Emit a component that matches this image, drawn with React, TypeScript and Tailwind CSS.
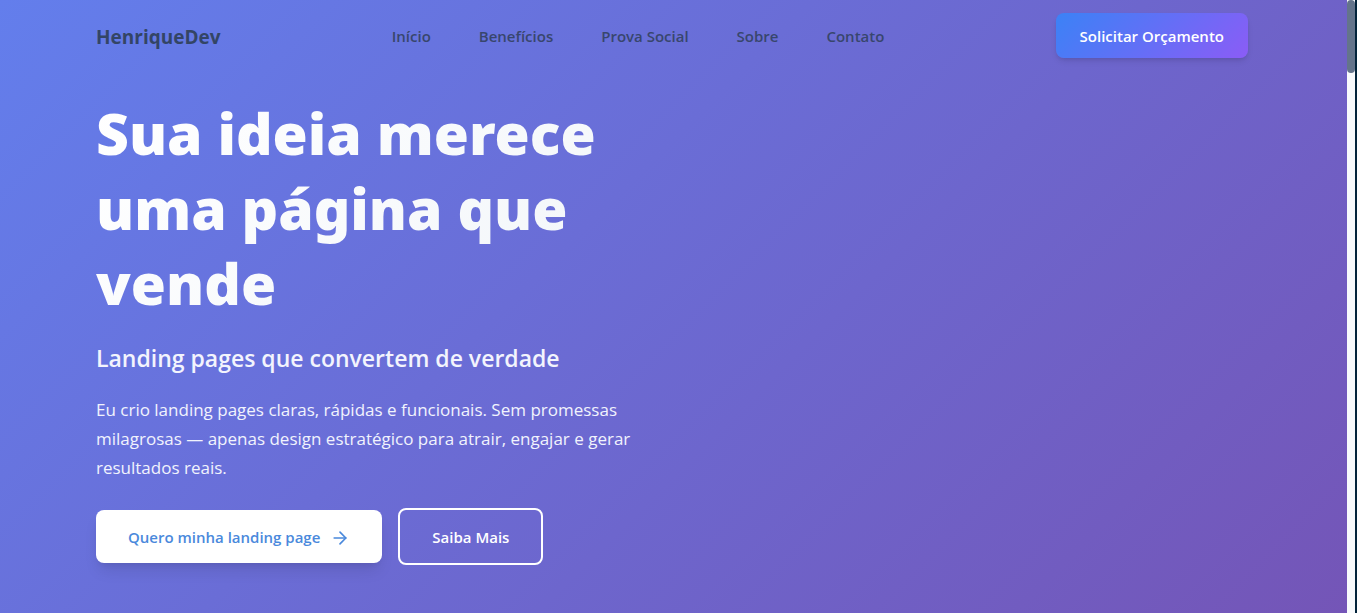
import { ArrowRight } from "lucide-react";

const links = [
  { label: "Início", href: "#inicio" },
  { label: "Benefícios", href: "#beneficios" },
  { label: "Prova Social", href: "#prova-social" },
  { label: "Sobre", href: "#sobre" },
  { label: "Contato", href: "#contato" },
];

function Header() {
  return (
    <header className="flex max-w-[1152px] items-center justify-between pt-[13px]">
      <a href="#inicio" className="pt-0.5 text-[19px] leading-7 font-bold text-[#334565]">
        HenriqueDev
      </a>
      <nav className="flex gap-12 text-[15px] leading-6 font-semibold text-[#38466d]">
        {links.map((link) => (
          <a key={link.href} href={link.href}>
            {link.label}
          </a>
        ))}
      </nav>
      <button
        type="button"
        className="h-[45px] rounded-lg bg-[linear-gradient(135deg,#3b82f6,#8b5cf6)] px-6 pt-0.5 text-[15px] font-semibold text-white shadow-md"
      >
        Solicitar Orçamento
      </button>
    </header>
  );
}

function Hero() {
  return (
    <section id="inicio" className="max-w-[560px] pt-[38px]">
      <h1 className="bg-[linear-gradient(135deg,#ffffff,#f1f5f9)] bg-clip-text font-['Noto_Sans',sans-serif] text-[57px] leading-[75px] font-black text-transparent">
        Sua ideia merece uma página que vende
      </h1>
      <p className="mt-5 text-[23px] leading-[34px] font-semibold text-[#f3f4fd]">
        Landing pages que convertem de verdade
      </p>
      <p className="mt-5 text-[17px] leading-[29px] text-[#f1f3fd]">
        Eu crio landing pages claras, rápidas e funcionais. Sem promessas
        milagrosas — apenas design estratégico para atrair, engajar e gerar
        resultados reais.
      </p>
      <div className="mt-[26px] flex items-center gap-4 text-[15px] font-semibold">
        <button
          type="button"
          className="flex h-[53px] items-center gap-2.5 rounded-lg bg-white px-8 pt-0.5 text-[#4a89dc] shadow-lg"
        >
          Quero minha landing page
          <ArrowRight size={20} aria-hidden="true" />
        </button>
        <button
          type="button"
          className="h-[57px] rounded-lg border-2 border-white px-8 pt-0.5 text-white"
        >
          Saiba Mais
        </button>
      </div>
    </section>
  );
}

export default function App() {
  return (
    <div className="flex min-h-screen font-['Open_Sans',sans-serif]">
      <main className="min-w-0 flex-1 bg-[linear-gradient(135deg,#637eec,#7455b7)] px-24">
        <Header />
        <Hero />
      </main>
      <div className="w-[10px] shrink-0 border-r-2 border-[#03243b] bg-[#f8fafc]" aria-hidden="true">
        <div className="h-[73px] rounded bg-[#64748b]" />
      </div>
    </div>
  );
}
